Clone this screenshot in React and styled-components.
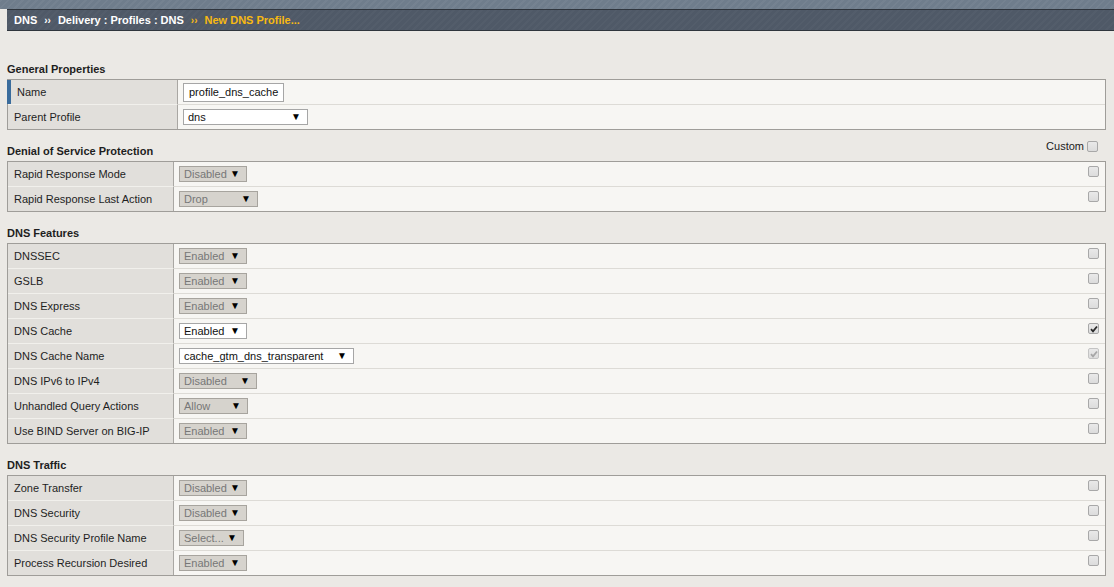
import React from 'react';
import styled, { createGlobalStyle } from 'styled-components';

const GlobalStyle = createGlobalStyle`
  html, body {
    margin: 0;
    padding: 0;
    background: #ebe9e5;
    font-family: "Liberation Sans", Arial, sans-serif;
    font-size: 11px;
    color: #222;
  }
`;

const Page = styled.div`
  width: 1114px;
  min-height: 587px;
  background: #ebe9e5;
`;

const TopBand = styled.div`
  height: 9px;
  background-color: #6f7d8c;
  background-image: repeating-linear-gradient(
    135deg,
    rgba(255, 255, 255, 0.04) 0 2px,
    rgba(0, 0, 0, 0) 2px 5px
  );
`;

const BreadcrumbBar = styled.div`
  margin-left: 7px;
  height: 20px;
  display: flex;
  align-items: center;
  padding-left: 7px;
  background-color: #4f5967;
  background-image: repeating-linear-gradient(
    135deg,
    rgba(255, 255, 255, 0.025) 0 2px,
    rgba(0, 0, 0, 0) 2px 5px
  );
  border-top: 1px solid #2f353d;
  border-bottom: 1px solid #2f353d;
  font-weight: bold;
  color: #fff;
  white-space: pre;
`;

const Sep = styled.span`
  font-size: 10px;
  margin: 0 7px;
  color: ${p => (p.$hl ? '#f7b912' : '#fff')};
`;

const Current = styled.span`
  color: #f7b912;
`;

const Content = styled.div`
  padding: 17px 8px 0 7px;
`;

const SectionHead = styled.div`
  display: flex;
  justify-content: space-between;
  align-items: flex-end;
  height: 13px;
  padding-top: 15px;
  margin-bottom: 3px;
`;

const SectionTitle = styled.div`
  font-weight: bold;
  line-height: 13px;
  color: #1e1e1e;
`;

const CustomBox = styled.label`
  display: flex;
  align-items: center;
  gap: 3px;
  margin: 0 8px 5px 0;
  color: #222;
  line-height: 13px;
`;

const Table = styled.div`
  border: 1px solid #9f9d99;
  background: #f7f6f3;
`;

const Row = styled.div`
  display: grid;
  grid-template-columns: ${p => p.$labelWidth}px 1fr 24px;
  height: 24px;
  & + & {
    height: 25px;
  }
  & + & > * {
    border-top: 1px solid #dddbd6;
  }
  & + & > *:first-child {
    border-top: 1px solid #f1f0ec;
  }
`;

const Label = styled.div`
  display: flex;
  align-items: center;
  background: #e1dfdb;
  border-right: 1px solid #a9a7a3;
  padding-left: 6px;
  border-left: ${p => (p.$accent ? '4px solid #3a6c9c' : 'none')};
  margin-left: ${p => (p.$accent ? '-1px' : '0')};
  color: #1e1e1e;
`;

const Value = styled.div`
  display: flex;
  align-items: center;
  padding-left: 5px;
`;

const CheckCell = styled.div`
  display: flex;
  align-items: center;
  justify-content: flex-end;
  padding: 0 6px 5px 0;
`;

const TextInput = styled.div`
  width: 101px;
  height: 19px;
  box-sizing: border-box;
  padding-left: 5px;
  border: 1px solid #a6a6a6;
  background: #fff;
  color: #111;
  display: flex;
  align-items: center;
`;

const Select = styled.div`
  width: ${p => p.$width}px;
  height: 16px;
  box-sizing: border-box;
  border: 1px solid ${p => (p.$disabled ? '#a7a49e' : '#a6a6a6')};
  background: ${p => (p.$disabled ? '#d6d3cd' : '#fff')};
  color: ${p => (p.$disabled ? '#777' : '#111')};
  display: flex;
  align-items: center;
  justify-content: space-between;
  padding: 0 6px 0 4px;
`;

const Arrow = styled.span`
  font-size: 10px;
  color: #000;
  line-height: 1;
`;

const Box = styled.span`
  width: 9px;
  height: 9px;
  border: 1px solid ${p => (p.$dim ? '#c4c4c4' : '#a8a8a8')};
  border-radius: 2px;
  background: linear-gradient(#e9e9e9, #dcdcdc);
  display: inline-flex;
  align-items: center;
  justify-content: center;
`;

function Check({ checked, dim }) {
  return (
    <Box $dim={dim}>
      {checked && (
        <svg width="8" height="8" viewBox="0 0 8 8">
          <path
            d="M1 4.2 L3 6.3 L7 1.5"
            fill="none"
            stroke={dim ? '#a6a6a6' : '#2a2a2a'}
            strokeWidth="1.8"
          />
        </svg>
      )}
    </Box>
  );
}

function Dropdown({ value, width, disabled = true }) {
  return (
    <Select $width={width} $disabled={disabled}>
      <span>{value}</span>
      <Arrow>▼</Arrow>
    </Select>
  );
}

const dosRows = [
  { label: 'Rapid Response Mode', value: 'Disabled', width: 68 },
  { label: 'Rapid Response Last Action', value: 'Drop', width: 79 },
];

const featureRows = [
  { label: 'DNSSEC', value: 'Enabled', width: 68 },
  { label: 'GSLB', value: 'Enabled', width: 68 },
  { label: 'DNS Express', value: 'Enabled', width: 68 },
  { label: 'DNS Cache', value: 'Enabled', width: 68, enabled: true, checked: true },
  { label: 'DNS Cache Name', value: 'cache_gtm_dns_transparent', width: 175, enabled: true, checked: true, dim: true },
  { label: 'DNS IPv6 to IPv4', value: 'Disabled', width: 78 },
  { label: 'Unhandled Query Actions', value: 'Allow', width: 69 },
  { label: 'Use BIND Server on BIG-IP', value: 'Enabled', width: 68 },
];

const trafficRows = [
  { label: 'Zone Transfer', value: 'Disabled', width: 68 },
  { label: 'DNS Security', value: 'Disabled', width: 68 },
  { label: 'DNS Security Profile Name', value: 'Select...', width: 65 },
  { label: 'Process Recursion Desired', value: 'Enabled', width: 68 },
];

function OptionTable({ rows }) {
  return (
    <Table>
      {rows.map(r => (
        <Row key={r.label} $labelWidth={166}>
          <Label>{r.label}</Label>
          <Value>
            <Dropdown value={r.value} width={r.width} disabled={!r.enabled} />
          </Value>
          <CheckCell>
            <Check checked={r.checked} dim={r.dim} />
          </CheckCell>
        </Row>
      ))}
    </Table>
  );
}

export default function App() {
  return (
    <Page>
      <GlobalStyle />
      <TopBand />
      <BreadcrumbBar>
        DNS<Sep>››</Sep>Delivery : Profiles : DNS<Sep $hl>››</Sep>
        <Current>New DNS Profile...</Current>
      </BreadcrumbBar>

      <Content>
        <SectionHead>
          <SectionTitle>General Properties</SectionTitle>
        </SectionHead>
        <Table>
          <Row $labelWidth={170}>
            <Label $accent>Name</Label>
            <Value>
              <TextInput>profile_dns_cache</TextInput>
            </Value>
            <CheckCell />
          </Row>
          <Row $labelWidth={170}>
            <Label>Parent Profile</Label>
            <Value>
              <Dropdown value="dns" width={125} disabled={false} />
            </Value>
            <CheckCell />
          </Row>
        </Table>

        <SectionHead>
          <SectionTitle>Denial of Service Protection</SectionTitle>
          <CustomBox>
            Custom <Check />
          </CustomBox>
        </SectionHead>
        <OptionTable rows={dosRows} />

        <SectionHead>
          <SectionTitle>DNS Features</SectionTitle>
        </SectionHead>
        <OptionTable rows={featureRows} />

        <SectionHead>
          <SectionTitle>DNS Traffic</SectionTitle>
        </SectionHead>
        <OptionTable rows={trafficRows} />
      </Content>
    </Page>
  );
}
